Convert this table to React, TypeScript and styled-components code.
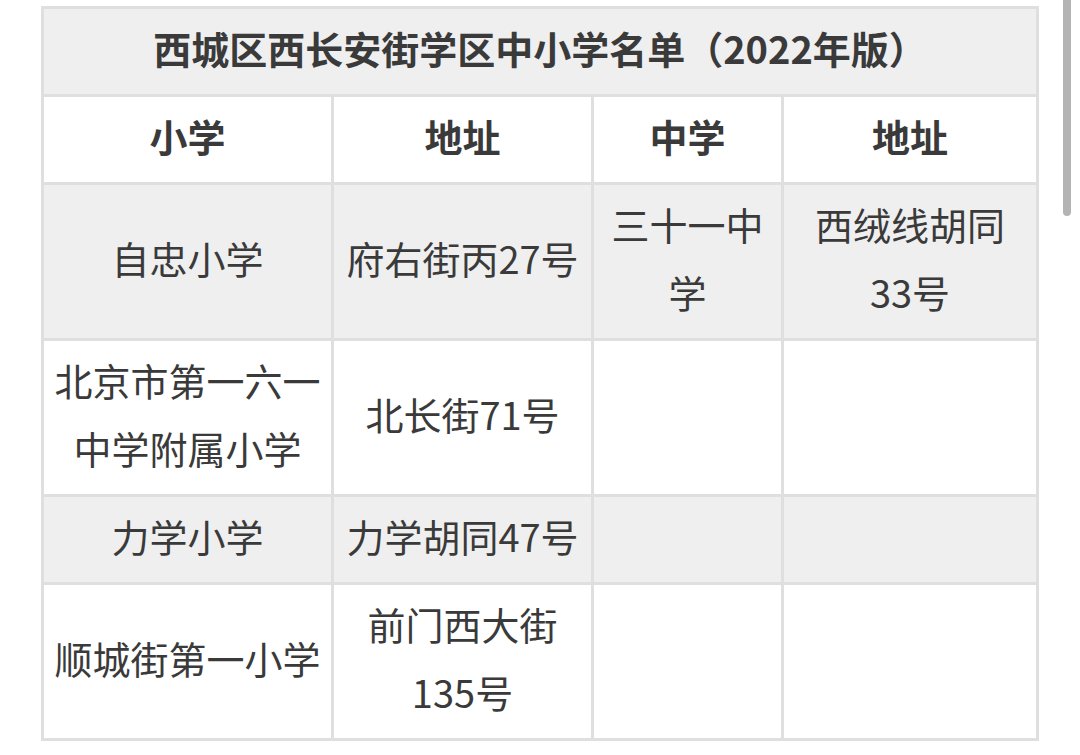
import React from "react";
import styled, { createGlobalStyle } from "styled-components";

const GlobalStyle = createGlobalStyle`
  html, body {
    margin: 0;
    padding: 0;
    background: #ffffff;
  }
  body {
    font-family: "Noto Sans CJK SC", "Noto Sans", sans-serif;
    color: #3a3a3a;
    overflow: hidden;
  }
`;

const Page = styled.div`
  padding: 6px 0 0 41px;
  width: 1080px;
  height: 755px;
  box-sizing: border-box;
`;

const Table = styled.table`
  border-collapse: collapse;
  table-layout: fixed;
  width: 995px;
  font-size: 38px;
  line-height: 68px;
`;

const Col = styled.col<{ $w: number }>`
  width: ${(p) => p.$w}px;
`;

const Row = styled.tr<{ $shade?: boolean }>`
  background: ${(p) => (p.$shade ? "#efefef" : "#ffffff")};
`;

const Cell = styled.td<{ $bold?: boolean }>`
  border: 3px solid #dfdfdf;
  padding: 5px 4px 12px;
  text-align: center;
  vertical-align: middle;
  white-space: pre;
  font-weight: ${(p) => (p.$bold ? 700 : 400)};
  color: #3a3a3a;
`;

const Scrollbar = styled.div`
  position: fixed;
  top: 0;
  left: 1063px;
  width: 8px;
  height: 216px;
  background: #b4b4b4;
  border-radius: 0 0 4px 4px;
`;

type RowData = { shade: boolean; cells: string[] };

const rows: RowData[] = [
  { shade: true, cells: ["自忠小学", "府右街丙27号", "三十一中\n学", "西绒线胡同\n33号"] },
  { shade: false, cells: ["北京市第一六一\n中学附属小学", "北长街71号", "", ""] },
  { shade: true, cells: ["力学小学", "力学胡同47号", "", ""] },
  { shade: false, cells: ["顺城街第一小学", "前门西大街\n135号", "", ""] },
];

export default function App() {
  return (
    <>
      <GlobalStyle />
      <Page>
        <Table>
          <colgroup>
            <Col $w={290} />
            <Col $w={260} />
            <Col $w={190} />
            <Col $w={255} />
          </colgroup>
          <tbody>
            <Row $shade>
              <Cell $bold colSpan={4}>
                西城区西长安街学区中小学名单（2022年版）
              </Cell>
            </Row>
            <Row>
              <Cell $bold>小学</Cell>
              <Cell $bold>地址</Cell>
              <Cell $bold>中学</Cell>
              <Cell $bold>地址</Cell>
            </Row>
            {rows.map((r, i) => (
              <Row key={i} $shade={r.shade}>
                {r.cells.map((c, j) => (
                  <Cell key={j}>{c}</Cell>
                ))}
              </Row>
            ))}
          </tbody>
        </Table>
      </Page>
      <Scrollbar />
    </>
  );
}
